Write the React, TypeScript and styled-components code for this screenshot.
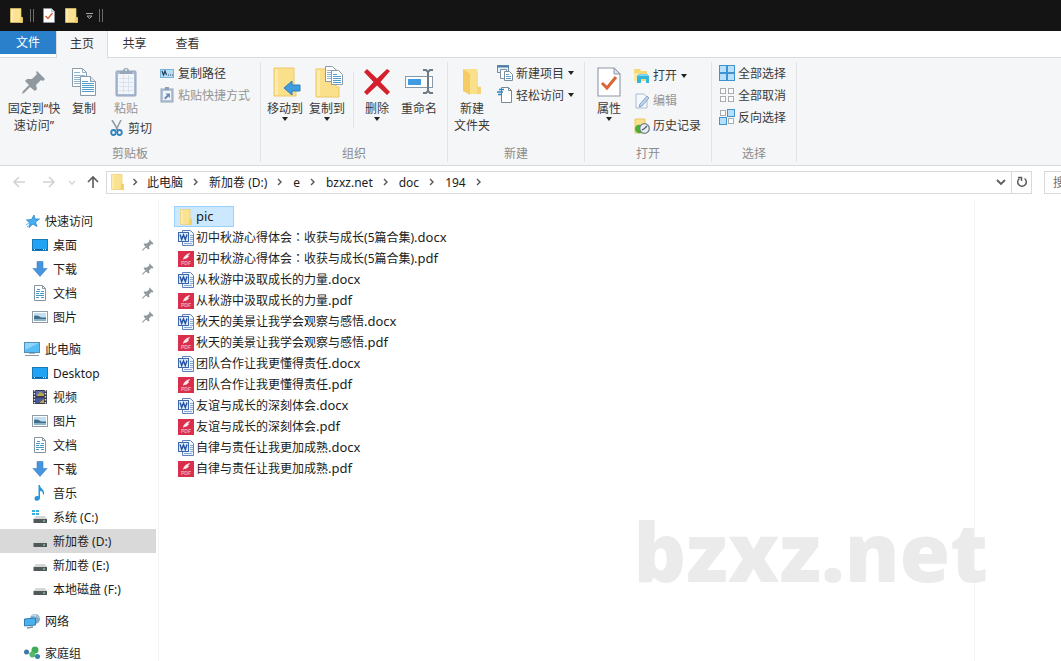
import React from "react";
import styled, { createGlobalStyle } from "styled-components";

const Global = createGlobalStyle`
  * { box-sizing: border-box; }
  body { margin: 0; background: #fff; }
  body, button, input {
    font-family: "Noto Sans", "Noto Sans CJK SC", sans-serif;
    font-size: 12px;
    line-height: 17px;
    color: #1c1c1c;
  }
  button { border: 0; padding: 0; background: none; cursor: default; }
  ul { list-style: none; margin: 0; padding: 0; }
`;

/* ---------- icons ---------- */

type Size = { w?: number; h?: number };

const Svg = styled.svg`
  display: block;
  flex: none;
`;

const Folder = ({ w = 13, h = 16 }: Size) => (
  <Svg width={w} height={h} viewBox="0 0 26 32" preserveAspectRatio="none">
    <path d="M1 1h21v19h3v11H1z" fill="#fbe292" stroke="#eccb6c" strokeWidth="1.4" />
    <path d="M20 20h5v11h-6z" fill="#f3cf68" />
    <path d="M2 2h4v28H2z" fill="#fdebae" />
  </Svg>
);

const CheckDoc = ({ w = 12, h = 16 }: Size) => (
  <Svg width={w} height={h} viewBox="0 0 24 30">
    <path d="M1 1h16l6 6v22H1z" fill="#fff" stroke="#8d97a8" strokeWidth="1.1" />
    <path d="M17 1v6h6z" fill="#dbe3ee" stroke="#8d97a8" />
    <path d="M5 16l5 5 9-11" fill="none" stroke="#dc6437" strokeWidth="3" />
  </Svg>
);

const PinShape = ({ w = 12, h = 12 }: Size) => (
  <Svg width={w} height={h} viewBox="0 0 24 24">
    <path d="M15 1l8 8-2 2-2-1-5 5 1 4-2 2-5-4-6 6-2 1 1-3 6-6-4-4 2-2 5 0 5-5-1-2z" fill="#8f999f" />
  </Svg>
);

const CopyIcon = () => (
  <Svg width="24" height="28" viewBox="0 0 24 28">
    <path d="M0.500 0.500h10l4 4v14h-14z" fill="#fff" stroke="#8b9aa8" />
    <path d="M10.500 0.500v4h4M2 4.500h6M2 7.500h11M2 9.500h7M2 11.500h6M2 13.500h6M2 15.500h6" fill="none" stroke="#8fb4cf" />
    <path d="M8.500 8.500h10l5 5v14h-15z" fill="#fff" stroke="#8b9aa8" />
    <path d="M18.500 8.500v5h5" fill="#dce9f2" stroke="#8b9aa8" />
    <path d="M10 13.500h6M10 15.500h12M10 17.500h12M10 19.500h12M10 21.500h12M10 23.500h12" stroke="#4f9ccb" />
  </Svg>
);

const PasteIcon = () => (
  <Svg width="22" height="30" viewBox="0 0 22 30">
    <rect x="1" y="4" width="20" height="25" rx="1" fill="#a9bad2" stroke="#93a5c0" />
    <rect x="3" y="7" width="16" height="20" fill="#f2f6fb" />
    <path d="M4 11.500h14M4 15.500h14M4 19.500h14M4 23.500h14M8.500 8v18M13.500 8v18" stroke="#d9e3ef" />
    <path d="M5 7V4h3a3 3 0 0 1 6 0h3v3z" fill="#98a7b8" />
    <circle cx="11" cy="3" r="1" fill="#f5f6f7" />
  </Svg>
);

const CutIcon = () => (
  <Svg width="14" height="16" viewBox="0 0 14 16">
    <path d="M2 0l6 10M11 0L6 10" stroke="#8d9aa6" strokeWidth="1.500" fill="none" />
    <ellipse cx="3.500" cy="12.500" rx="2.300" ry="2.500" fill="none" stroke="#2f84bd" strokeWidth="1.800" />
    <ellipse cx="9.500" cy="12.500" rx="2.300" ry="2.500" fill="none" stroke="#2f84bd" strokeWidth="1.800" />
  </Svg>
);

const PathIcon = () => (
  <Svg width="14" height="14" viewBox="0 0 14 14">
    <rect x="0.500" y="3.500" width="13" height="8" fill="#b5dcf5" stroke="#79b4dc" />
    <path d="M2 5l1.500 4L5 5l1.500 4" fill="none" stroke="#24415c" strokeWidth="1.200" />
    <path d="M8 9h1M10 9h1M12 9h1" stroke="#24415c" strokeWidth="1.200" />
  </Svg>
);

const ShortcutIcon = () => (
  <Svg width="14" height="16" viewBox="0 0 14 16">
    <rect x="1" y="2" width="12" height="13" fill="#b5c3d7" stroke="#94a6c0" />
    <rect x="3" y="4" width="8" height="9" fill="#f1f5fa" />
    <path d="M5 3V0h4v3z" fill="#8f9fb2" />
    <path d="M4 11l3-3-1.500-1.500H10V11L8.500 9.500l-3 3z" fill="#6a8cba" />
  </Svg>
);

const MoveIcon = () => (
  <Svg width="32" height="30" viewBox="-4 0 32 30">
    <path d="M1 1h20v18h2v10H1z" fill="#fbe08c" stroke="#edc966" />
    <path d="M2 2h3v26H2z" fill="#fdeaae" />
    <path d="M11 21l8-7v4h8v6h-8v4z" fill="#3f9ce0" stroke="#2f7fbe" />
  </Svg>
);

const CopyToIcon = () => (
  <Svg width="32" height="32" viewBox="-4 0 32 32">
    <path d="M1 3h20v18h3v10H1z" fill="#fbe08c" stroke="#edc966" />
    <path d="M2 4h3v26H2z" fill="#fdeaae" />
    <path d="M10.500 0.500h7l3 3v12h-10z" fill="#fff" stroke="#8b9aa8" />
    <path d="M12 4.500h5M12 6.500h6M12 8.500h4M12 10.500h4M12 12.500h4" stroke="#8fb4cf" />
    <path d="M16.500 4.500h7l4 4v10h-11z" fill="#fff" stroke="#8b9aa8" />
    <path d="M18 8.500h4M18 10.500h8M18 12.500h8M18 14.500h8M18 16.500h8" stroke="#4f9ccb" />
  </Svg>
);

const DeleteIcon = () => (
  <Svg width="28" height="28" viewBox="0 0 28 28">
    <path d="M4 1l10 9.500L24 1l3 2-9.500 11L27 24l-3 3-10-9.500L4 27l-3-3 9.500-10L1 4z" fill="#d3202c" />
  </Svg>
);

const RenameIcon = () => (
  <Svg width="30" height="28" viewBox="-1 0 30 28">
    <rect x="0.500" y="8.500" width="27" height="11" fill="#fff" stroke="#8b98a5" />
    <rect x="3" y="11" width="13" height="6" fill="#3f9ce0" />
    <path d="M18 2h3l2 2 2-2h3M23 3v21M18 25h3l2-2 2 2h3" fill="none" stroke="#6f7a84" strokeWidth="2" />
  </Svg>
);

const NewFolderIcon = () => (
  <Svg width="20" height="28" viewBox="0 0 20 28">
    <path d="M1 1h14l1 4v14l3 2v5H7z" fill="#fbe08c" />
    <path d="M1 1l7 5v21l-7-4z" fill="#f4cc63" />
    <path d="M15 18l4 1v7h-4z" fill="#f6d375" />
  </Svg>
);

const NewItemIcon = () => (
  <Svg width="16" height="16" viewBox="0 0 16 16">
    <path d="M0.500 0.500h11v7h-11z" fill="#e5f1fa" stroke="#6f8ba3" />
    <path d="M0 1.500h12" stroke="#4d7fa8" strokeWidth="2" />
    <path d="M3.500 4.500h6v9h-6z" fill="#fff" stroke="#8594a3" />
    <path d="M7.500 6.500h5l3 3v6h-8z" fill="#fff" stroke="#7b8b9b" />
    <path d="M9 9.500h3M9 11.500h5M9 13.500h5" stroke="#5d9dc9" />
  </Svg>
);

const EasyIcon = () => (
  <Svg width="16" height="16" viewBox="0 0 16 16">
    <path d="M4.500 0.500h7l3 3v12h-10z" fill="#fff" stroke="#7b8791" />
    <path d="M11.500 0.500v3h3" fill="none" stroke="#7b8791" />
    <path d="M2 2.500h5M0 5h6M1 7.500h4" stroke="#2f84bd" strokeWidth="1.500" />
  </Svg>
);

const OpenIcon = () => (
  <Svg width="16" height="16" viewBox="0 0 16 16">
    <path d="M0 1h6l1 2h6v10H0z" fill="#f8d876" />
    <path d="M0 5h5v8H0z" fill="#fbe8a4" />
    <path d="M3 15V8l2-2h8l2 2v7h-3v-4H7v4z" fill="#35b7dc" />
    <path d="M5 6h8l2 2H3z" fill="#7cd5ec" />
  </Svg>
);

const EditIcon = () => (
  <Svg width="14" height="16" viewBox="0 0 14 16">
    <path d="M1 1h8l3 3v11H1z" fill="#f5f9fd" stroke="#a9bdd0" />
    <path d="M12 3l2 2-7 8-3 1 1-3z" fill="#bdd3ea" stroke="#89a8c6" />
  </Svg>
);

const HistoryIcon = () => (
  <Svg width="16" height="16" viewBox="0 0 16 16">
    <path d="M1 1h10v14H1z" fill="#fae08b" stroke="#ecca68" />
    <path d="M1 11c0-4 3-5 6-4v8c-3 1-6-1-6-4z" fill="#4eae3c" />
    <circle cx="10.500" cy="10.500" r="4.800" fill="#e8eef1" stroke="#6f7f87" strokeWidth="1.300" />
    <path d="M8 12l2.500-1.500L13 8" fill="none" stroke="#4a5a62" strokeWidth="1.200" />
  </Svg>
);

const GridIcon = ({ on }: { on: boolean[] }) => (
  <Svg width="16" height="16" viewBox="0 0 16 16">
    {on.map((v, i) => {
      const s = v ? 7 : 5;
      const off = v ? 0 : 1;
      return (
        <rect
          key={i}
          x={0.5 + (i % 2) * 8 + off}
          y={0.5 + Math.floor(i / 2) * 8 + off}
          width={s}
          height={s}
          fill={v ? "#b9e0fa" : "#fdfdfd"}
          stroke={v ? "#3f94cf" : "#a8adb2"}
        />
      );
    })}
  </Svg>
);

const Caret = () => (
  <Svg width="6" height="4" viewBox="0 0 6 4">
    <path d="M0 0h6L3 4z" fill="#222" />
  </Svg>
);

const Star = () => (
  <Svg width="16" height="16" viewBox="0 0 16 16">
    <path d="M10 2l1 4 4.500 0-4 3 1.500 4.500-4-2.500-4 3.500 1-4.500-3.500-3 5-.500z" fill="#45aef0" stroke="#2a86c8" strokeWidth="0.800" />
    <path d="M2 12l3-2M3 14l3-2" stroke="#5cb2ea" />
  </Svg>
);

const DesktopIcon = () => (
  <Svg width="16" height="16" viewBox="0 0 16 16">
    <rect x="0.500" y="2.500" width="15" height="11" fill="#21a3f5" stroke="#1778b8" />
    <path d="M1 12.500h14" stroke="#0d5f9b" />
    <path d="M2 12.500h1M11 12.500h1M13 12.500h1" stroke="#d9efff" />
  </Svg>
);

const DownIcon = () => (
  <Svg width="16" height="16" viewBox="0 0 16 16">
    <path d="M5 0.500h6v7h4l-7 8-7-8h4z" fill="#4793dc" stroke="#3a80c5" strokeWidth="0.600" />
  </Svg>
);

const DocIcon = () => (
  <Svg width="16" height="16" viewBox="0 0 16 16">
    <path d="M2.500 0.500h8l3 3v12h-11z" fill="#fff" stroke="#8a949c" />
    <path d="M10.500 0.500v3h3" fill="none" stroke="#8a949c" />
    <path d="M5 4.500h3M4 6.500h4M9 6.500h3M4 8.500h3M8 8.500h4M4 10.500h8M4 12.500h3M9 12.500h3" stroke="#3f9bc9" />
  </Svg>
);

const PictureIcon = () => (
  <Svg width="16" height="16" viewBox="0 0 16 16">
    <rect x="0.500" y="2.500" width="15" height="11" fill="#fff" stroke="#949ca3" />
    <rect x="2" y="4" width="12" height="8" fill="#bfdff2" />
    <path d="M2 7c3-1 5 0 7 1.500l5 0V10H2z" fill="#416f8d" />
    <path d="M2 10h12v2H2z" fill="#8db6cb" />
  </Svg>
);

const ComputerIcon = () => (
  <Svg width="16" height="16" viewBox="0 0 16 16">
    <rect x="0.500" y="1.500" width="15" height="10" fill="#58bcf5" stroke="#4f8fb8" />
    <path d="M1 2h14L1 9z" fill="#8ed4fb" />
    <path d="M5 12.500h6" stroke="#a6b0b8" />
    <path d="M1 14.500h14" stroke="#8a98a3" />
  </Svg>
);

const VideoIcon = () => (
  <Svg width="16" height="16" viewBox="0 0 16 16">
    <rect x="1" y="1" width="14" height="14" fill="#3a3c4c" />
    <path d="M2.500 1v14M13.500 1v14" stroke="#e2e4ea" strokeWidth="1.400" strokeDasharray="1.500 1.500" />
    <path d="M4 2h8v5H4z" fill="#5a6cae" />
    <path d="M4 9h8v5H4z" fill="#46589e" />
    <path d="M5 6l3-3 4 2v2H5zM8 13l4-3v4H8z" fill="#b9a64d" />
  </Svg>
);

const MusicIcon = () => (
  <Svg width="16" height="16" viewBox="0 0 16 16">
    <path d="M6.500 0H8c0 4 5 4 4 9.500h-1C11 7 10 6 8 6v7c0 3-5 4-5.500 1 0-2.500 2-3.500 4-2.500z" fill="#2795d9" />
  </Svg>
);

const DriveIcon = ({ system }: { system?: boolean }) => (
  <Svg width="16" height="16" viewBox="0 0 16 16">
    {system && <path d="M0 1h3v2H0zM4 1h3v2H4zM0 4h3v2H0zM4 4h3v2H4z" fill="#35b2e2" />}
    <path d="M4 7h9l2 3H1.500z" fill="#d3d7d7" />
    <path d="M1.500 10H15v4H1.500z" fill="#50585a" />
    <path d="M11 12h2" stroke="#b6e7c6" />
  </Svg>
);

const NetworkIcon = () => (
  <Svg width="16" height="16" viewBox="0 0 16 16">
    <circle cx="11" cy="6" r="5" fill="#7fa9c6" />
    <path d="M8 3c3-2 5 0 7 2M11 1v10" stroke="#d3e5f0" fill="none" />
    <path d="M0.500 6l11-1v7l-11 1z" fill="#4bb1ee" stroke="#2f7fb5" />
    <path d="M3 15l6-1" stroke="#7d92a0" strokeWidth="1.400" />
  </Svg>
);

const HomeGroupIcon = () => (
  <Svg width="16" height="16" viewBox="0 0 16 16">
    <path d="M3 7l6 4M6 8l5-4" stroke="#9fc5d6" />
    <circle cx="2.500" cy="7" r="2.500" fill="#3f78a8" />
    <circle cx="11" cy="5" r="3.500" fill="#3dab57" />
    <circle cx="8.500" cy="9.500" r="3" fill="#51bb66" />
    <circle cx="13.500" cy="11.500" r="2.500" fill="#357fb4" />
  </Svg>
);

const WordIcon = () => (
  <Svg width="16" height="16" viewBox="0 0 16 16">
    <path d="M4.500 0.500h8l3 3v12h-11z" fill="#eef4fc" stroke="#5f80b8" />
    <path d="M12 5.500h3M12 7.500h3M12 9.500h3M12 11.500h3M6 13.500h8" stroke="#8aa8d6" />
    <rect x="0.500" y="2.500" width="10" height="9" fill="#dfeafa" stroke="#3c66ad" />
    <path d="M2 4.500l1.700 5L5.500 5l1.800 4.500L9 4.500" fill="none" stroke="#2450a2" strokeWidth="1.400" />
  </Svg>
);

const PdfIcon = () => (
  <Svg width="16" height="16" viewBox="0 0 16 16">
    <rect width="16" height="16" fill="#d92f4c" />
    <path d="M5 9c0-3 3-6 7-7 0 1-1 2-2 2l1 1C9 8 7 8 6 8z" fill="#fbe6ea" />
    <text x="8" y="14" textAnchor="middle" fontFamily="Liberation Sans" fontWeight="700" fontSize="5" fill="#f3aab7">
      PDF
    </text>
  </Svg>
);

const Crumb = ({ w = 26 }: Size) => (
  <Svg width={w} height="8" viewBox={`${(26 - w) / 2} 0 ${w} 8`}>
    <path d="M11 1l3 3-3 3" fill="none" stroke="#555" strokeWidth="1.400" />
  </Svg>
);

const NavArrow = ({ d, color }: { d: string; color: string }) => (
  <Svg width="14" height="14" viewBox="0 0 14 14">
    <path d={d} fill="none" stroke={color} strokeWidth="1.600" />
  </Svg>
);

/* ---------- window frame ---------- */

const Window = styled.div`
  display: flex;
  flex-direction: column;
  height: 100vh;
  overflow: hidden;
`;

const TitleBar = styled.header`
  display: flex;
  align-items: center;
  flex: none;
  height: 31px;
  padding-left: 10px;
  background: #141414;
`;

const Bars = styled.span<{ $l: number; $r: number }>`
  width: 4px;
  height: 13px;
  margin: 0 ${(p) => p.$r}px 0 ${(p) => p.$l}px;
  border: solid #6c6c6c;
  border-width: 0 1px;
`;

const QuickButton = styled.button<{ $gap?: number }>`
  margin-right: ${(p) => p.$gap ?? 0}px;
`;

const Tabs = styled.nav`
  display: flex;
  flex: none;
  height: 27px;
  border-bottom: 1px solid #dadbdc;
`;

const Tab = styled.button<{ $kind?: "file" | "active" }>`
  width: ${(p) => (p.$kind === "file" ? 56 : p.$kind === "active" ? 52 : 53)}px;
  height: ${(p) => (p.$kind === "file" ? 23 : 27)}px;
  padding-bottom: ${(p) => (p.$kind === "file" ? 0 : 3)}px;
  color: ${(p) => (p.$kind === "file" ? "#fff" : "#333")};
  background: ${(p) => (p.$kind === "file" ? "#2a80cb" : p.$kind ? "#f5f6f7" : "none")};
  border: solid #dadbdc;
  border-width: ${(p) => (p.$kind === "active" ? "0 1px" : "0")};
`;

/* ---------- ribbon ---------- */

const Ribbon = styled.section`
  display: flex;
  flex: none;
  height: 108px;
  background: #f5f6f7;
  border-bottom: 1px solid #d9dadb;
`;

const Group = styled.div<{ $w: number; $pad: number }>`
  display: flex;
  flex-direction: column;
  flex: none;
  width: ${(p) => p.$w}px;
  margin: 4px 0 3px;
  border-right: 1px solid #e2e3e4;
  > div { padding-left: ${(p) => p.$pad}px; }
`;

const GroupBody = styled.div`
  display: flex;
  align-items: flex-start;
  flex: 1;
`;

const GroupLabel = styled.span`
  text-align: center;
  color: #8c8c8c;
  line-height: 17px;
`;

const Big = styled.button<{ $w: number; $dim?: boolean }>`
  display: flex;
  flex-direction: column;
  align-items: center;
  width: ${(p) => p.$w}px;
  padding-top: 1px;
  color: ${(p) => (p.$dim ? "#949494" : "#3a3a3a")};
  white-space: pre;
`;

const BigIcon = styled.span`
  display: flex;
  align-items: center;
  justify-content: center;
  height: 37px;
`;

const Column = styled.div<{ $gap?: number; $top?: number }>`
  display: flex;
  flex-direction: column;
  align-items: flex-start;
  margin-left: ${(p) => p.$gap ?? 0}px;
  padding-top: ${(p) => p.$top ?? 0}px;
`;

const Small = styled.button<{ $h?: number; $dim?: boolean; $indent?: number }>`
  display: flex;
  align-items: center;
  gap: 4px;
  height: ${(p) => p.$h ?? 22}px;
  padding-left: ${(p) => p.$indent ?? 0}px;
  color: ${(p) => (p.$dim ? "#949494" : "#3a3a3a")};
  white-space: nowrap;
`;

const IconSlot = styled.span`
  display: flex;
  justify-content: center;
  width: 14px;
`;

const Separator = styled.span`
  width: 1px;
  height: 56px;
  margin: 10px 2px 0 5px;
  background: #e2e3e4;
`;

/* ---------- address bar ---------- */

const AddressRow = styled.div`
  display: flex;
  align-items: center;
  flex: none;
  height: 34px;
  padding-bottom: 2px;
`;

const NavButtons = styled.div`
  display: flex;
  align-items: center;
  width: 106px;
  padding-left: 12px;
`;

const NavButton = styled.button<{ $gap?: number }>`
  margin-right: ${(p) => p.$gap ?? 0}px;
`;

const AddressBox = styled.div`
  display: flex;
  align-items: center;
  flex: 1;
  height: 23px;
  padding-left: 4px;
  border: 1px solid #d9d9d9;
`;

const Crumbs = styled.div`
  display: flex;
  align-items: center;
  flex: 1;
`;

const CrumbLink = styled.a`
  color: #1c1c1c;
  text-decoration: none;
  white-space: pre;
`;

const BoxButton = styled.button<{ $line?: boolean }>`
  display: flex;
  align-items: center;
  justify-content: center;
  width: 20px;
  height: 21px;
  border-left: ${(p) => (p.$line ? 1 : 0)}px solid #d9d9d9;
`;

const SearchBox = styled.input`
  flex: none;
  width: 17px;
  height: 23px;
  margin-left: 12px;
  padding: 0 0 0 8px;
  border: solid #d9d9d9;
  border-width: 1px 0 1px 1px;
  border-radius: 0;
  outline: 0;
  &::placeholder { color: #6d6d6d; opacity: 1; }
`;

/* ---------- main area ---------- */

const Main = styled.main`
  display: flex;
  flex: 1;
  min-height: 0;
`;

const Sidebar = styled.aside`
  flex: none;
  width: 159px;
  padding: 9px 2px 0 0;
  border-right: 1px solid #f3f3f3;
  overflow-y: auto;
  scrollbar-width: none;
`;

const SideGroup = styled.ul`
  margin-bottom: 8px;
`;

const SideLink = styled.a<{ $root?: boolean; $on?: boolean }>`
  display: flex;
  align-items: center;
  gap: 5px;
  height: 24px;
  padding: 0 2px 0 ${(p) => (p.$root ? 24 : 32)}px;
  background: ${(p) => (p.$on ? "#d9d9d9" : "none")};
  color: #1c1c1c;
  text-decoration: none;
  white-space: pre;
`;

const SideName = styled.span`
  flex: 1;
`;

const Files = styled.section`
  position: relative;
  flex: 1;
  padding: 6px 0 0 15px;
`;

const FileRow = styled.li<{ $on?: boolean }>`
  display: flex;
  align-items: center;
  gap: 2px;
  width: ${(p) => (p.$on ? "60px" : "fit-content")};
  height: 21px;
  padding-left: ${(p) => (p.$on ? 3 : 4)}px;
  border: solid #99d1ff;
  border-width: ${(p) => (p.$on ? 1 : 0)}px;
  background: ${(p) => (p.$on ? "#cce8ff" : "none")};
  white-space: nowrap;
`;

const FileIcon = styled.span`
  display: flex;
  justify-content: center;
  width: 16px;
`;

const Extension = styled.span`
  font-size: 13px;
`;

const Colon = styled.span`
  font-family: "Noto Sans CJK TC", sans-serif;
  line-height: 1;
`;

const Preview = styled.aside`
  flex: none;
  width: 87px;
  border-left: 1px solid #f3f3f3;
`;

const Watermark = styled.div`
  position: absolute;
  right: -14px;
  bottom: 56px;
  font: 800 82px/110px "Open Sans", sans-serif;
  color: #ebebeb;
`;

const stems: string[][] = [
  ["初中秋游心得体会", "收获与成长(5篇合集)"],
  ["从秋游中汲取成长的力量"],
  ["秋天的美景让我学会观察与感悟"],
  ["团队合作让我更懂得责任"],
  ["友谊与成长的深刻体会"],
  ["自律与责任让我更加成熟"],
];

type Item = { name: string; icon: React.ReactNode; root?: boolean; on?: boolean; pinned?: boolean };

const places: Item[][] = [
  [
    { name: "快速访问", icon: <Star />, root: true },
    { name: "桌面", icon: <DesktopIcon />, pinned: true },
    { name: "下载", icon: <DownIcon />, pinned: true },
    { name: "文档", icon: <DocIcon />, pinned: true },
    { name: "图片", icon: <PictureIcon />, pinned: true },
  ],
  [
    { name: "此电脑", icon: <ComputerIcon />, root: true },
    { name: "Desktop", icon: <DesktopIcon /> },
    { name: "视频", icon: <VideoIcon /> },
    { name: "图片", icon: <PictureIcon /> },
    { name: "文档", icon: <DocIcon /> },
    { name: "下载", icon: <DownIcon /> },
    { name: "音乐", icon: <MusicIcon /> },
    { name: "系统 (C:)", icon: <DriveIcon system /> },
    { name: "新加卷 (D:)", icon: <DriveIcon />, on: true },
    { name: "新加卷 (E:)", icon: <DriveIcon /> },
    { name: "本地磁盘 (F:)", icon: <DriveIcon /> },
  ],
  [{ name: "网络", icon: <NetworkIcon />, root: true }],
  [{ name: "家庭组", icon: <HomeGroupIcon />, root: true }],
];

const BigButton = ({ w, icon, label, dim, caret }: {
  w: number; icon: React.ReactNode; label: string; dim?: boolean; caret?: boolean;
}) => (
  <Big $w={w} $dim={dim}>
    <BigIcon>{icon}</BigIcon>
    <span>{label}</span>
    {caret && <Caret />}
  </Big>
);

const SmallButton = ({ icon, label, dim, caret, h, indent }: {
  icon: React.ReactNode; label: string; dim?: boolean; caret?: boolean; h?: number; indent?: number;
}) => (
  <Small $h={h} $dim={dim} $indent={indent}>
    <IconSlot>{icon}</IconSlot>
    <span>{label}</span>
    {caret && <Caret />}
  </Small>
);

export default function App() {
  return (
    <Window>
      <Global />
      <TitleBar>
        <Folder w={13} h={15} />
        <Bars $l={7} $r={9} />
        <QuickButton $gap={10} aria-label="属性"><CheckDoc w={12} h={15} /></QuickButton>
        <QuickButton $gap={8} aria-label="新建文件夹"><Folder w={13} h={15} /></QuickButton>
        <QuickButton aria-label="自定义快速访问工具栏">
          <Svg width="7" height="8" viewBox="0 0 7 8">
            <path d="M0 1.500h7M1 4l2.500 2.500L6 4z" fill="none" stroke="#a8a8a8" />
          </Svg>
        </QuickButton>
        <Bars $l={6} $r={0} />
      </TitleBar>

      <Tabs>
        <Tab $kind="file">文件</Tab>
        <Tab $kind="active">主页</Tab>
        <Tab>共享</Tab>
        <Tab>查看</Tab>
      </Tabs>

      <Ribbon>
        <Group $w={261} $pad={6}>
          <GroupBody>
            <BigButton w={56} icon={<PinShape w={24} h={24} />} label={"固定到“快\n速访问”"} />
            <BigButton w={44} icon={<CopyIcon />} label="复制" />
            <Column>
              <BigButton w={40} icon={<PasteIcon />} label="粘贴" dim />
              <SmallButton h={22} indent={4} icon={<CutIcon />} label="剪切" />
            </Column>
            <Column $gap={8}>
              <SmallButton icon={<PathIcon />} label="复制路径" />
              <SmallButton icon={<ShortcutIcon />} label="粘贴快捷方式" dim />
            </Column>
          </GroupBody>
          <GroupLabel>剪贴板</GroupLabel>
        </Group>

        <Group $w={187} $pad={3}>
          <GroupBody>
            <BigButton w={42} icon={<MoveIcon />} label="移动到" caret />
            <BigButton w={42} icon={<CopyToIcon />} label="复制到" caret />
            <Separator />
            <BigButton w={42} icon={<DeleteIcon />} label="删除" caret />
            <BigButton w={42} icon={<RenameIcon />} label="重命名" />
          </GroupBody>
          <GroupLabel>组织</GroupLabel>
        </Group>

        <Group $w={137} $pad={2}>
          <GroupBody>
            <BigButton w={44} icon={<NewFolderIcon />} label={"新建\n文件夹"} />
            <Column $gap={4}>
              <SmallButton icon={<NewItemIcon />} label="新建项目" caret />
              <SmallButton icon={<EasyIcon />} label="轻松访问" caret />
            </Column>
          </GroupBody>
          <GroupLabel>新建</GroupLabel>
        </Group>

        <Group $w={127} $pad={2}>
          <GroupBody>
            <BigButton w={44} icon={<CheckDoc w={24} h={30} />} label="属性" caret />
            <Column $gap={4} $top={1}>
              <SmallButton h={25} icon={<OpenIcon />} label="打开" caret />
              <SmallButton h={25} icon={<EditIcon />} label="编辑" dim />
              <SmallButton h={25} icon={<HistoryIcon />} label="历史记录" />
            </Column>
          </GroupBody>
          <GroupLabel>打开</GroupLabel>
        </Group>

        <Group $w={85} $pad={8}>
          <GroupBody>
            <Column>
              <SmallButton icon={<GridIcon on={[true, true, true, true]} />} label="全部选择" />
              <SmallButton icon={<GridIcon on={[false, false, false, false]} />} label="全部取消" />
              <SmallButton icon={<GridIcon on={[false, true, true, false]} />} label="反向选择" />
            </Column>
          </GroupBody>
          <GroupLabel>选择</GroupLabel>
        </Group>
      </Ribbon>

      <AddressRow>
        <NavButtons>
          <NavButton $gap={16} aria-label="后退"><NavArrow color="#d2d2d2" d="M13 7H2M7 2L2 7l5 5" /></NavButton>
          <NavButton $gap={9} aria-label="前进"><NavArrow color="#d2d2d2" d="M1 7h11M7 2l5 5-5 5" /></NavButton>
          <NavButton $gap={7} aria-label="最近位置"><NavArrow color="#d8d8d8" d="M4 6l3 3 3-3" /></NavButton>
          <NavButton aria-label="上移"><NavArrow color="#5c5c5c" d="M7 13V2M2 7l5-5 5 5" /></NavButton>
        </NavButtons>
        <AddressBox>
          <Crumbs>
            <Folder w={13} h={16} />
            {["此电脑", "新加卷 (D:)", "e", "bzxz.net", "doc", "194"].map((c, i) => (
              <React.Fragment key={c}>
                <Crumb w={i === 0 ? 23 : 26} />
                <CrumbLink href="#">{c}</CrumbLink>
              </React.Fragment>
            ))}
            <Crumb />
          </Crumbs>
          <BoxButton aria-label="以前的位置">
            <Svg width="10" height="8" viewBox="0 0 10 8">
              <path d="M1 2l4 4 4-4" fill="none" stroke="#5c5c5c" strokeWidth="1.800" />
            </Svg>
          </BoxButton>
          <BoxButton $line aria-label="刷新">
            <Svg width="12" height="12" viewBox="0 0 12 12">
              <path d="M8.500 2.500a4.300 4.300 0 1 1-5 0" fill="none" stroke="#5c5c5c" strokeWidth="1.500" />
              <path d="M2 1.500h3.500V5" fill="none" stroke="#5c5c5c" strokeWidth="1.500" />
            </Svg>
          </BoxButton>
        </AddressBox>
        <SearchBox placeholder="搜索" aria-label="搜索" />
      </AddressRow>

      <Main>
        <Sidebar>
          {places.map((group, g) => (
            <SideGroup key={g}>
              {group.map((p) => (
                <li key={p.name}>
                  <SideLink href="#" $root={p.root} $on={p.on}>
                    {p.icon}
                    <SideName>{p.name}</SideName>
                    {p.pinned && <PinShape w={12} h={12} />}
                  </SideLink>
                </li>
              ))}
            </SideGroup>
          ))}
        </Sidebar>
        <Files>
          <Watermark>bzxz.net</Watermark>
          <ul>
            <FileRow $on>
              <FileIcon><Folder w={12} h={16} /></FileIcon>
              <Extension>pic</Extension>
            </FileRow>
            {stems.flatMap(([head, tail]) =>
              [".docx", ".pdf"].map((ext) => (
                <FileRow key={head + ext}>
                  <FileIcon>{ext === ".pdf" ? <PdfIcon /> : <WordIcon />}</FileIcon>
                  <span>
                    {head}
                    {tail && <><Colon>：</Colon>{tail}</>}
                    <Extension>{ext}</Extension>
                  </span>
                </FileRow>
              ))
            )}
          </ul>
        </Files>
        <Preview />
      </Main>
    </Window>
  );
}
